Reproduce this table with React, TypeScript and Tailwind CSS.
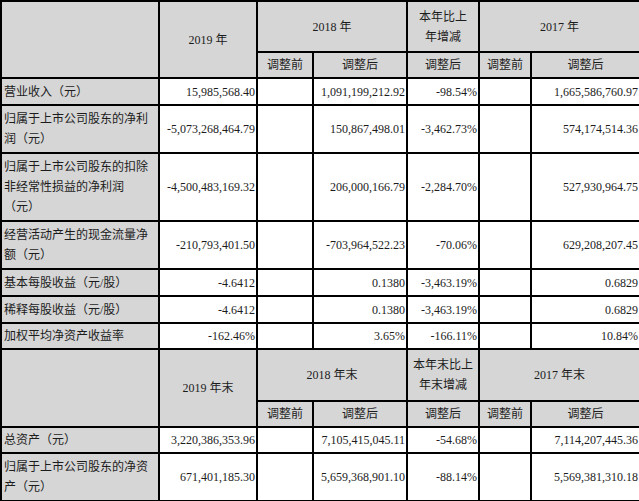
import React from 'react';

interface Row {
  label: string[];
  h: number;
  v: string[];
}

const TOP_ROWS: Row[] = [
  { label: ['营业收入（元）'], h: 27, v: ['15,985,568.40', '', '1,091,199,212.92', '-98.54%', '', '1,665,586,760.97'] },
  { label: ['归属于上市公司股东的净利', '润（元）'], h: 48, v: ['-5,073,268,464.79', '', '150,867,498.01', '-3,462.73%', '', '574,174,514.36'] },
  { label: ['归属于上市公司股东的扣除', '非经常性损益的净利润', '（元）'], h: 68, v: ['-4,500,483,169.32', '', '206,000,166.79', '-2,284.70%', '', '527,930,964.75'] },
  { label: ['经营活动产生的现金流量净', '额（元）'], h: 48, v: ['-210,793,401.50', '', '-703,964,522.23', '-70.06%', '', '629,208,207.45'] },
  { label: ['基本每股收益（元/股）'], h: 27, v: ['-4.6412', '', '0.1380', '-3,463.19%', '', '0.6829'] },
  { label: ['稀释每股收益（元/股）'], h: 27, v: ['-4.6412', '', '0.1380', '-3,463.19%', '', '0.6829'] },
  { label: ['加权平均净资产收益率'], h: 26, v: ['-162.46%', '', '3.65%', '-166.11%', '', '10.84%'] },
];

const BOTTOM_ROWS: Row[] = [
  { label: ['总资产（元）'], h: 26, v: ['3,220,386,353.96', '', '7,105,415,045.11', '-54.68%', '', '7,114,207,445.36'] },
  { label: ['归属于上市公司股东的净资', '产（元）'], h: 48, v: ['671,401,185.30', '', '5,659,368,901.10', '-88.14%', '', '5,569,381,310.18'] },
];

const gray = 'bg-[#d6d6d6]';
const cell = 'border-2 border-black p-0';

const Header: React.FC<{ y19: string; y18: string; chg: string[]; y17: string; h1: number }> = ({ y19, y18, chg, y17, h1 }) => (
  <>
    <tr style={{ height: h1 }}>
      <td rowSpan={2} className={`${cell} ${gray}`}></td>
      <td rowSpan={2} className={`${cell} ${gray} text-center`}>{y19}</td>
      <td colSpan={2} className={`${cell} ${gray} text-center`}>{y18}</td>
      <td className={`${cell} ${gray} text-center`}>
        {chg[0]}
        <br />
        {chg[1]}
      </td>
      <td colSpan={2} className={`${cell} ${gray} text-center`}>{y17}</td>
    </tr>
    <tr className="h-[26px]">
      <td className={`${cell} ${gray} text-center`}>调整前</td>
      <td className={`${cell} ${gray} text-center`}>调整后</td>
      <td className={`${cell} ${gray} text-center`}>调整后</td>
      <td className={`${cell} ${gray} text-center`}>调整前</td>
      <td className={`${cell} ${gray} text-center`}>调整后</td>
    </tr>
  </>
);

const DataRow: React.FC<{ r: Row }> = ({ r }) => (
  <tr style={{ height: r.h }}>
    <td className={`${cell} ${gray} pl-[2px] text-left`}>
      {r.label.map((l, i) => (
        <div key={i}>{l}</div>
      ))}
    </td>
    {r.v.map((x, i) => (
      <td key={i} className={`${cell} bg-white pr-[1px] text-right`}>{x}</td>
    ))}
  </tr>
);

const App: React.FC = () => {
  return (
    <div className="w-[639px] h-[501px] bg-white overflow-hidden">
      <table
        className="w-[639px] table-fixed border-collapse text-[12px] leading-[20px] text-[#1c1c1c]"
        style={{ fontFamily: '"Liberation Serif", "Noto Sans CJK SC", serif' }}
      >
        <colgroup>
          <col className="w-[158px]" />
          <col className="w-[98px]" />
          <col className="w-[56px]" />
          <col className="w-[94px]" />
          <col className="w-[72px]" />
          <col className="w-[52px]" />
          <col className="w-[109px]" />
        </colgroup>
        <tbody className="align-middle">
          <Header y19="2019 年" y18="2018 年" chg={['本年比上', '年增减']} y17="2017 年" h1={51} />
          {TOP_ROWS.map((r, i) => <DataRow key={i} r={r} />)}
          <Header y19="2019 年末" y18="2018 年末" chg={['本年末比上', '年末增减']} y17="2017 年末" h1={52} />
          {BOTTOM_ROWS.map((r, i) => <DataRow key={i} r={r} />)}
        </tbody>
      </table>
    </div>
  );
};

export default App;
